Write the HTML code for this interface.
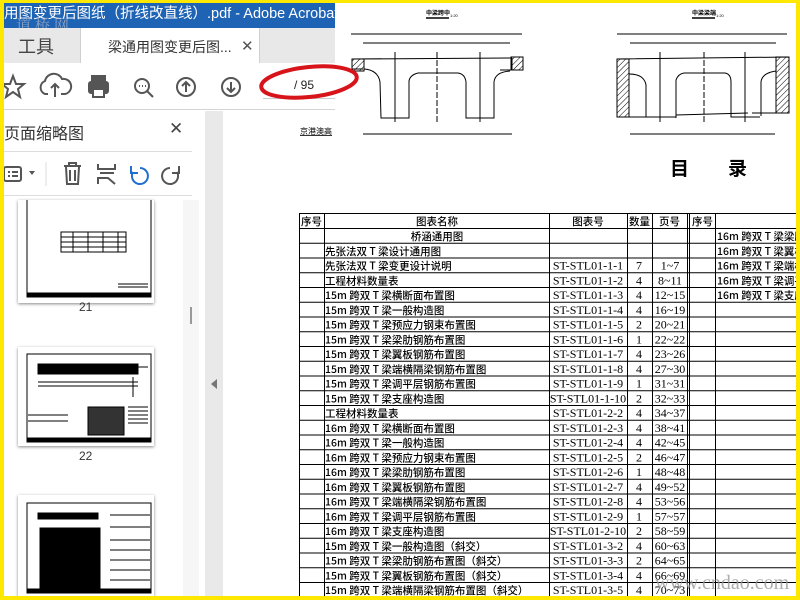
<!DOCTYPE html>
<html><head><meta charset="utf-8"><style>
*{margin:0;padding:0;box-sizing:border-box}
body{width:800px;height:600px;overflow:hidden;position:relative;background:#fff;font-family:"Liberation Sans","Noto Sans CJK SC",sans-serif}
.a{position:absolute}
</style></head><body>
<div class="a" style="left:223px;top:110px;width:577px;height:490px;background:#fff"></div>
<svg class="a" style="left:0;top:0" width="800" height="600">
<defs><pattern id="h" width="4" height="4" patternUnits="userSpaceOnUse" patternTransform="rotate(45)"><line x1="0" y1="0" x2="0" y2="4" stroke="#000" stroke-width="1"/></pattern></defs>
<g font-family="Noto Sans CJK SC,sans-serif" font-size="6" font-weight="bold"><text x="426" y="15">中梁跨中</text><text x="692" y="15">中梁梁端</text></g>
<g font-family="Liberation Sans,sans-serif" font-size="4"><text x="450" y="17">1:20</text><text x="716" y="17">1:20</text></g>
<g stroke="#000" fill="none" stroke-width="1">
<line x1="426" y1="18" x2="449" y2="18" stroke-width="1.5"/>
<line x1="351" y1="34" x2="522" y2="34"/><line x1="363" y1="43" x2="510" y2="43"/>
<line x1="363" y1="134" x2="512" y2="134"/>
<path d="M352 59 L512 58 M352 59 V69 H363 M512 58 V70 H500 M364 69 Q378 70 380 82 L381 118 H409 V81 Q410 75 418 73 H458 Q465 74 466 82 V118 H494 V82 Q495 72 510 71"/>
<rect x="352" y="59" width="12" height="12" fill="url(#h)"/>
<rect x="511" y="57" width="12" height="13" fill="url(#h)"/>
<line x1="395" y1="52" x2="395" y2="122"/><line x1="437" y1="52" x2="437" y2="122" stroke-dasharray="6 2"/><line x1="480" y1="52" x2="480" y2="122"/>
<line x1="692" y1="18" x2="715" y2="18" stroke-width="1.5"/>
<line x1="617" y1="34" x2="787" y2="34"/><line x1="630" y1="43" x2="776" y2="43"/>
<line x1="630" y1="134" x2="775" y2="134"/>
<path d="M617 59 L789 57 V113 H752 M617 59 V117 H647 M629 74 Q644 74 646 85 V117 H676 M676 115 L748 113 M676 118 V80 Q678 74 684 73 H725 Q731 74 731 82 V117 H760 M761 116 V82 Q762 73 776 71"/>
<rect x="617" y="59" width="12" height="58" fill="url(#h)"/>
<rect x="776" y="57" width="13" height="56" fill="url(#h)"/>
<line x1="660" y1="52" x2="660" y2="122"/><line x1="704" y1="52" x2="704" y2="122" stroke-dasharray="6 2"/><line x1="745" y1="52" x2="745" y2="122"/>
</g>
<text x="670" y="175" font-size="19" font-weight="bold" font-family="Noto Sans CJK SC,sans-serif">目</text>
<text x="728" y="175" font-size="19" font-weight="bold" font-family="Noto Sans CJK SC,sans-serif">录</text>
<text x="300" y="134" font-size="8" font-family="Noto Sans CJK SC,sans-serif" text-decoration="underline">京港澳高</text>
<g stroke="#000" stroke-width="1">
<line x1="299" y1="213.5" x2="800" y2="213.5"/>
<line x1="299.5" y1="213" x2="299.5" y2="600"/><line x1="324.5" y1="213" x2="324.5" y2="600"/>
<line x1="549.5" y1="213" x2="549.5" y2="600"/><line x1="627.5" y1="213" x2="627.5" y2="600"/>
<line x1="652.5" y1="213" x2="652.5" y2="600"/><line x1="687.5" y1="213" x2="687.5" y2="600"/>
<line x1="689.5" y1="213" x2="689.5" y2="600"/><line x1="715.5" y1="213" x2="715.5" y2="600"/>
<line x1="299" y1="228.5" x2="800" y2="228.5"/><line x1="299" y1="243.25" x2="800" y2="243.25"/>
<line x1="299" y1="258" x2="800" y2="258"/><line x1="299" y1="272.75" x2="800" y2="272.75"/>
<line x1="299" y1="287.5" x2="800" y2="287.5"/><line x1="299" y1="302.25" x2="800" y2="302.25"/>
<line x1="299" y1="317" x2="800" y2="317"/><line x1="299" y1="331.75" x2="800" y2="331.75"/>
<line x1="299" y1="346.5" x2="800" y2="346.5"/><line x1="299" y1="361.25" x2="800" y2="361.25"/>
<line x1="299" y1="376" x2="800" y2="376"/><line x1="299" y1="390.75" x2="800" y2="390.75"/>
<line x1="299" y1="405.5" x2="800" y2="405.5"/><line x1="299" y1="420.25" x2="800" y2="420.25"/>
<line x1="299" y1="435" x2="800" y2="435"/><line x1="299" y1="449.75" x2="800" y2="449.75"/>
<line x1="299" y1="464.5" x2="800" y2="464.5"/><line x1="299" y1="479.25" x2="800" y2="479.25"/>
<line x1="299" y1="494" x2="800" y2="494"/><line x1="299" y1="508.75" x2="800" y2="508.75"/>
<line x1="299" y1="523.5" x2="800" y2="523.5"/><line x1="299" y1="538.25" x2="800" y2="538.25"/>
<line x1="299" y1="553" x2="800" y2="553"/><line x1="299" y1="567.75" x2="800" y2="567.75"/>
<line x1="299" y1="582.5" x2="800" y2="582.5"/>
</g>
<g font-family="Noto Sans CJK SC,sans-serif" font-size="10.5" font-weight="500" fill="#000">
<text x="301" y="225">序号</text><text x="437" y="225" text-anchor="middle">图表名称</text>
<text x="588" y="225" text-anchor="middle">图表号</text><text x="629" y="225">数量</text><text x="659" y="225">页号</text><text x="692" y="225">序号</text>
<text x="437" y="240" text-anchor="middle">桥涵通用图</text>
<text x="325" y="254.75">先张法双 T 梁设计通用图</text>
<text x="325" y="269.5">先张法双 T 梁变更设计说明</text>
<text x="325" y="284.25">工程材料数量表</text>
<text x="325" y="299">15m 跨双 T 梁横断面布置图</text>
<text x="325" y="313.75">15m 跨双 T 梁一般构造图</text>
<text x="325" y="328.5">15m 跨双 T 梁预应力钢束布置图</text>
<text x="325" y="343.25">15m 跨双 T 梁梁肋钢筋布置图</text>
<text x="325" y="358">15m 跨双 T 梁翼板钢筋布置图</text>
<text x="325" y="372.75">15m 跨双 T 梁端横隔梁钢筋布置图</text>
<text x="325" y="387.5">15m 跨双 T 梁调平层钢筋布置图</text>
<text x="325" y="402.25">15m 跨双 T 梁支座构造图</text>
<text x="325" y="417">工程材料数量表</text>
<text x="325" y="431.75">16m 跨双 T 梁横断面布置图</text>
<text x="325" y="446.5">16m 跨双 T 梁一般构造图</text>
<text x="325" y="461.25">16m 跨双 T 梁预应力钢束布置图</text>
<text x="325" y="476">16m 跨双 T 梁梁肋钢筋布置图</text>
<text x="325" y="490.75">16m 跨双 T 梁翼板钢筋布置图</text>
<text x="325" y="505.5">16m 跨双 T 梁端横隔梁钢筋布置图</text>
<text x="325" y="520.25">16m 跨双 T 梁调平层钢筋布置图</text>
<text x="325" y="535">16m 跨双 T 梁支座构造图</text>
<text x="325" y="549.75">15m 跨双 T 梁一般构造图（斜交）</text>
<text x="325" y="564.5">15m 跨双 T 梁梁肋钢筋布置图（斜交）</text>
<text x="325" y="579.25">15m 跨双 T 梁翼板钢筋布置图（斜交）</text>
<text x="325" y="594">15m 跨双 T 梁端横隔梁钢筋布置图（斜交）</text>
<text x="717" y="240">16m 跨双 T 梁梁肋</text>
<text x="717" y="254.75">16m 跨双 T 梁翼板</text>
<text x="717" y="269.5">16m 跨双 T 梁端横</text>
<text x="717" y="284.25">16m 跨双 T 梁调平</text>
<text x="717" y="299">16m 跨双 T 梁支座</text>
</g>
<g font-family="Liberation Serif,serif" font-size="12" fill="#000" text-anchor="middle">
<text x="588" y="269.5">ST-STL01-1-1</text><text x="639" y="269.5">7</text><text x="670" y="269.5">1~7</text>
<text x="588" y="284.25">ST-STL01-1-2</text><text x="639" y="284.25">4</text><text x="670" y="284.25">8~11</text>
<text x="588" y="299">ST-STL01-1-3</text><text x="639" y="299">4</text><text x="670" y="299">12~15</text>
<text x="588" y="313.75">ST-STL01-1-4</text><text x="639" y="313.75">4</text><text x="670" y="313.75">16~19</text>
<text x="588" y="328.5">ST-STL01-1-5</text><text x="639" y="328.5">2</text><text x="670" y="328.5">20~21</text>
<text x="588" y="343.25">ST-STL01-1-6</text><text x="639" y="343.25">1</text><text x="670" y="343.25">22~22</text>
<text x="588" y="358">ST-STL01-1-7</text><text x="639" y="358">4</text><text x="670" y="358">23~26</text>
<text x="588" y="372.75">ST-STL01-1-8</text><text x="639" y="372.75">4</text><text x="670" y="372.75">27~30</text>
<text x="588" y="387.5">ST-STL01-1-9</text><text x="639" y="387.5">1</text><text x="670" y="387.5">31~31</text>
<text x="588" y="402.25">ST-STL01-1-10</text><text x="639" y="402.25">2</text><text x="670" y="402.25">32~33</text>
<text x="588" y="417">ST-STL01-2-2</text><text x="639" y="417">4</text><text x="670" y="417">34~37</text>
<text x="588" y="431.75">ST-STL01-2-3</text><text x="639" y="431.75">4</text><text x="670" y="431.75">38~41</text>
<text x="588" y="446.5">ST-STL01-2-4</text><text x="639" y="446.5">4</text><text x="670" y="446.5">42~45</text>
<text x="588" y="461.25">ST-STL01-2-5</text><text x="639" y="461.25">2</text><text x="670" y="461.25">46~47</text>
<text x="588" y="476">ST-STL01-2-6</text><text x="639" y="476">1</text><text x="670" y="476">48~48</text>
<text x="588" y="490.75">ST-STL01-2-7</text><text x="639" y="490.75">4</text><text x="670" y="490.75">49~52</text>
<text x="588" y="505.5">ST-STL01-2-8</text><text x="639" y="505.5">4</text><text x="670" y="505.5">53~56</text>
<text x="588" y="520.25">ST-STL01-2-9</text><text x="639" y="520.25">1</text><text x="670" y="520.25">57~57</text>
<text x="588" y="535">ST-STL01-2-10</text><text x="639" y="535">2</text><text x="670" y="535">58~59</text>
<text x="588" y="549.75">ST-STL01-3-2</text><text x="639" y="549.75">4</text><text x="670" y="549.75">60~63</text>
<text x="588" y="564.5">ST-STL01-3-3</text><text x="639" y="564.5">2</text><text x="670" y="564.5">64~65</text>
<text x="588" y="579.25">ST-STL01-3-4</text><text x="639" y="579.25">4</text><text x="670" y="579.25">66~69</text>
<text x="588" y="594">ST-STL01-3-5</text><text x="639" y="594">4</text><text x="670" y="594">70~73</text>
</g>
<text x="655" y="589" font-family="Liberation Serif,serif" font-size="20" fill="#999" opacity="0.8">www.cndao.com</text>
</svg>

<div class="a" style="left:0;top:0;width:335px;height:28px;background:#1f63b5;color:#fff;font-size:14.5px;line-height:26px;white-space:nowrap;overflow:hidden;padding-left:4px;padding-top:1px">用图变更后图纸（折线改直线）.pdf - Adobe Acrobat Pro (64-bit)</div>
<div class="a" style="left:16px;top:14px;color:#8aa0c0;font-size:15px;letter-spacing:4px;font-family:'Noto Serif CJK SC',serif">道桥网</div>
<div class="a" style="left:0;top:28px;width:335px;height:35px;background:#e8e8e8"></div>
<div class="a" style="left:18px;top:33px;font-size:18px;color:#444">工具</div>
<div class="a" style="left:80px;top:28px;width:180px;height:36px;background:#fff;border-left:1px solid #d0d0d0;border-right:1px solid #d0d0d0"></div>
<div class="a" style="left:108px;top:37px;font-size:14px;color:#333">梁通用图变更后图...</div>
<div class="a" style="left:241px;top:37px;font-size:15px;color:#555">✕</div>
<div class="a" style="left:0;top:63px;width:335px;height:47px;background:#fff;border-bottom:1px solid #d4d4d4"></div>
<svg class="a" style="left:0;top:63px" width="335" height="47" fill="none" stroke="#555" stroke-width="2">
<path d="M13 13 L16 21 L24 21 L18 26 L20 34 L13 29 L6 34 L8 26 L2 21 L10 21 Z"/>
<path d="M48 31 H45 a7 7 0 0 1 0 -13 a9 9 0 0 1 17 -2 a7 7 0 0 1 3 15 H61 M55 34 V21 M51 25 L55 21 L59 25"/>
<rect x="89" y="19" width="19" height="11" rx="2" fill="#555"/><rect x="92" y="13" width="13" height="6" fill="#555"/><rect x="93" y="26" width="11" height="8" fill="#fff" stroke="#555"/>
<circle cx="142" cy="23" r="7"/><path d="M147 28 L153 34"/><path d="M139 23h1M142 23h1M145 23h1"/>
<circle cx="186" cy="24" r="9"/><path d="M186 29V19M182 23l4-4 4 4"/>
<circle cx="231" cy="24" r="9"/><path d="M231 19V29M227 25l4 4 4-4"/>
</svg>
<div class="a" style="left:263px;top:98px;width:72px;height:1px;background:#ccc"></div>
<div class="a" style="left:294px;top:78px;font-size:12px;color:#222">/ 95</div>
<svg class="a" style="left:255px;top:60px" width="110" height="45"><ellipse cx="54" cy="22" rx="48" ry="15" fill="none" stroke="#d8141b" stroke-width="4" transform="rotate(-6 54 22)"/></svg>
<div class="a" style="left:0;top:111px;width:205px;height:489px;background:#fff"></div>
<div class="a" style="left:4px;top:120px;font-size:16px;color:#333">页面缩略图</div>
<div class="a" style="left:169px;top:119px;font-size:17px;color:#444">✕</div>
<div class="a" style="left:4px;top:151px;width:188px;height:1px;background:#ddd"></div>
<div class="a" style="left:4px;top:195px;width:188px;height:1px;background:#ddd"></div>
<svg class="a" style="left:0;top:158px" width="200" height="32" fill="none" stroke-width="2">
<rect x="4" y="9" width="17" height="14" rx="2" stroke="#555"/><path d="M8 14h2M8 18h2M12 14h6M12 18h6" stroke="#555"/>
<path d="M29 13l3 4 3-4z" fill="#555"/><line x1="46" y1="4" x2="46" y2="28" stroke="#ddd" stroke-width="1"/>
<path d="M64 8h17M69 8V5h7v3M66 9l1 17h11l1-17M70 12v11M75 12v11" stroke="#555"/>
<path d="M98 6v5h17V6M98 26v-6h10l7 6M100 15h14" stroke="#555"/>
<path d="M140 10a8 8 0 1 1 -7 4M131 8v7h7" stroke="#1e6fd0"/>
<path d="M170 10a8 8 0 1 0 7 4M179 8v7h-7" stroke="#555"/>
</svg>
<div class="a" style="left:183px;top:200px;width:16px;height:400px;background:#f6f6f6"></div>
<div class="a" style="left:190px;top:307px;width:2px;height:17px;background:#999"></div>
<div class="a" style="left:18px;top:200px;width:136px;height:103px;background:#fff;box-shadow:0 1px 3px #888"></div>
<svg class="a" style="left:18px;top:200px" width="136" height="103" stroke="#000" fill="none">
<rect x="9" y="-2" width="124" height="99"/><rect x="43" y="32" width="65" height="20"/><path d="M43 37h65M43 42h65M43 47h65M55 32v20M70 32v20M85 32v20M100 32v20"/>
<rect x="9" y="93" width="124" height="4" fill="#000"/><path d="M100 84h30M100 87h30"/></svg>
<div class="a" style="left:79px;top:300px;font-size:12px;color:#333">21</div>
<div class="a" style="left:18px;top:347px;width:136px;height:99px;background:#fff;box-shadow:0 1px 3px #888"></div>
<svg class="a" style="left:18px;top:347px" width="136" height="99" stroke="#000" fill="none">
<rect x="9" y="7" width="124" height="88"/><rect x="20" y="17" width="100" height="10" fill="#000"/><path d="M20 35h100M20 39h100M10 68h40M10 74h40M110 20h20M115 30v20"/>
<rect x="70" y="60" width="36" height="28" fill="#333"/><path d="M110 60h20M110 64h20M110 68h20M110 72h20M110 76h20"/>
<rect x="9" y="91" width="124" height="4" fill="#000"/></svg>
<div class="a" style="left:79px;top:449px;font-size:12px;color:#333">22</div>
<div class="a" style="left:18px;top:495px;width:136px;height:105px;background:#fff;box-shadow:0 1px 3px #888"></div>
<svg class="a" style="left:18px;top:495px" width="136" height="105" stroke="#000" fill="none">
<rect x="9" y="8" width="124" height="90"/><rect x="20" y="18" width="60" height="6" fill="#000"/><rect x="22" y="33" width="60" height="60" fill="#000"/>
<path d="M92 20h40M92 32h40M92 45h40M92 55h40M92 65h40M92 75h40M92 85h40"/>
<rect x="9" y="94" width="124" height="4" fill="#000"/></svg>
<div class="a" style="left:205px;top:111px;width:18px;height:489px;background:#e9e9e9"></div>
<div class="a" style="left:211px;top:379px;width:0;height:0;border-top:5px solid transparent;border-bottom:5px solid transparent;border-right:6px solid #777"></div>
<div class="a" style="left:0;top:0;width:800px;height:3px;background:#ffe800"></div>
<div class="a" style="left:0;top:0;width:4px;height:600px;background:#ffe800"></div>
<div class="a" style="left:796px;top:0;width:4px;height:600px;background:#ffe800"></div>
<div class="a" style="left:0;top:596px;width:800px;height:4px;background:#ffe800"></div>
</body></html>
